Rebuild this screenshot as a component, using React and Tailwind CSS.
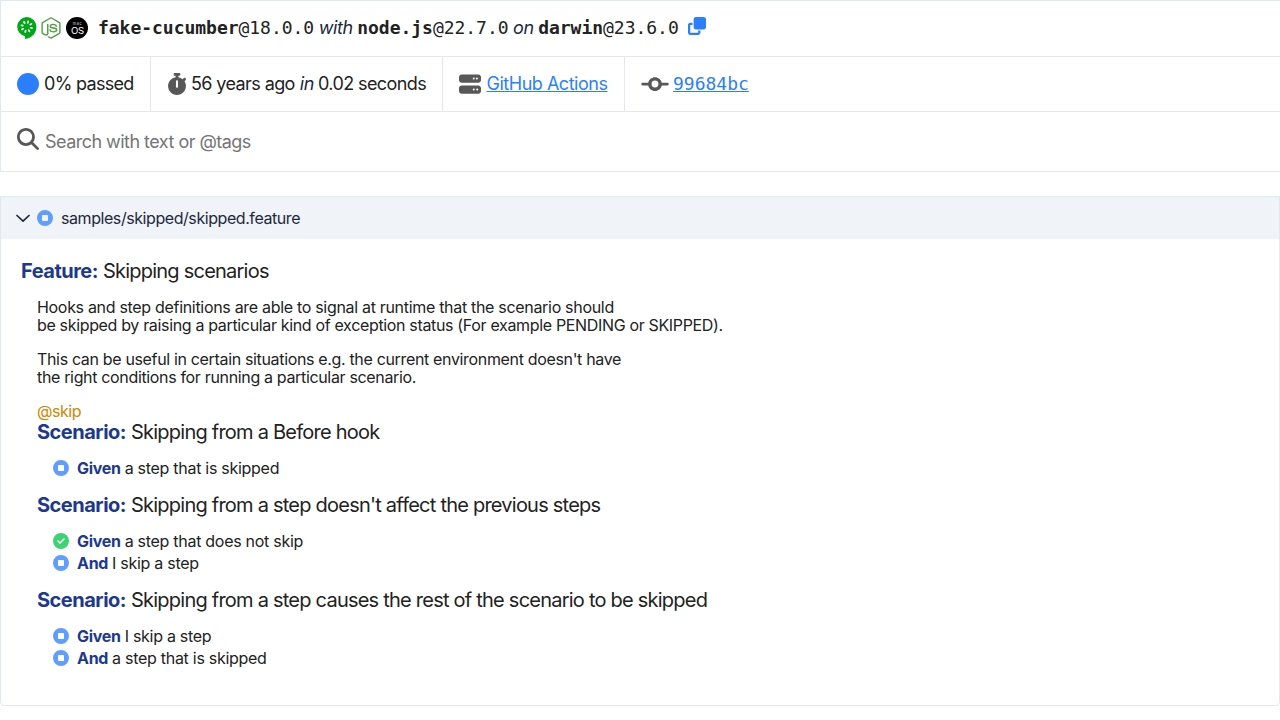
import {
  FaCircleCheck,
  FaCircleStop,
  FaClone,
  FaCodeCommit,
  FaMagnifyingGlass,
  FaNodeJs,
  FaServer,
  FaStopwatch,
} from "react-icons/fa6";

const SEEDS = [15, 60, 105, 150, 195, 240, 285, 330];

function CucumberLogo() {
  return (
    <svg viewBox="0 0 20 22" className="h-[22px] w-5">
      <path d="M9.7 0A9.7 9.7 0 0 0 8 19.2V22C14.5 21 19.4 16.5 19.4 9.9A9.7 9.7 0 0 0 9.7 0Z" fill="#00a818" />
      {SEEDS.map((a) => (
        <ellipse key={a} cx="9.7" cy="4.9" rx="0.95" ry="1.6" fill="#fff" transform={`rotate(${a} 9.7 9.7)`} />
      ))}
    </svg>
  );
}

function MacLogo() {
  return (
    <svg viewBox="0 0 22 22" className="size-[22px]">
      <circle cx="11" cy="11" r="11" fill="#000" />
      <text x="11" y="7.9" textAnchor="middle" fontFamily="Inter, sans-serif" fontSize="3.8" fill="#ddd" textLength="8.4">mac</text>
      <text x="11.2" y="17" textAnchor="middle" fontFamily="Inter, sans-serif" fontSize="9.6" fill="#fff" textLength="12.6">OS</text>
    </svg>
  );
}

function Meta({ name, version }) {
  return (
    <span className="font-['DejaVu_Sans_Mono',monospace] tracking-[-0.03px]">
      <b>{name}</b>@{version}
    </span>
  );
}

function Word({ children }) {
  return <em className="text-[#1d293d] tracking-[-0.4px]">{children}</em>;
}

function Step({ status, keyword, text }) {
  return (
    <li className="flex h-[22px] items-center">
      {status === "passed" ? (
        <FaCircleCheck className="size-4 text-[#3dd375]" />
      ) : (
        <FaCircleStop className="size-4 text-[#5f9eff]" />
      )}
      <b className="ml-2 tracking-[-0.3px] text-[#1c398e]">{keyword}</b>
      <span className="ml-1 tracking-[-0.28px]">{text}</span>
    </li>
  );
}

function Title({ keyword, text }) {
  return (
    <h2 className="flex h-6 items-center gap-[5px] text-[20px] leading-6">
      <b className="tracking-[-0.5px] text-[#1c398e]">{keyword}:</b>
      <span className="tracking-[-0.77px]">{text}</span>
    </h2>
  );
}

function Scenario({ text, steps }) {
  return (
    <section>
      <Title keyword="Scenario" text={text} />
      <ul className="mt-[13px] pl-4">
        {steps.map((s) => (
          <Step key={s[1] + s[2]} status={s[0]} keyword={s[1]} text={s[2]} />
        ))}
      </ul>
    </section>
  );
}

export default function App() {
  return (
    <div className="h-[720px] overflow-hidden bg-white font-['Inter',sans-serif] text-[16px] tracking-[-0.31px] text-[#222]">
      <header className="border border-r-0 border-[#e2e8f0] text-[18px] tracking-[-0.6px]">
        <div className="flex h-[55px] items-center whitespace-nowrap pb-0.5 pl-4">
          <span className="flex items-center">
            <CucumberLogo />
            <FaNodeJs className="ml-[3px] size-[22px] text-[#539e43]" />
            <span className="ml-1"><MacLogo /></span>
          </span>
          <span className="ml-[10px] flex items-center gap-[4.5px]">
            <Meta name="fake-cucumber" version="18.0.0" />
            <Word>with</Word>
            <Meta name="node.js" version="22.7.0" />
            <Word>on</Word>
            <Meta name="darwin" version="23.6.0" />
          </span>
          <FaClone className="mb-[3px] ml-[9px] size-[18px] text-[#2b7fff]" />
        </div>
        <div className="flex h-14 border-y border-[#e2e8f0] whitespace-nowrap">
          <div className="flex w-[150px] items-center border-r border-[#e2e8f0] pb-px pl-4">
            <span className="size-[22px] rounded-full bg-[#2b7fff]" />
            <span className="ml-[5px] tracking-[-0.7px]">0% passed</span>
          </div>
          <div className="flex w-[292px] items-center border-r border-[#e2e8f0] pb-px pl-4">
            <FaStopwatch className="h-[22px] w-5 text-[#585858]" />
            <span className="ml-1">56 years ago</span>
            <span className="ml-[5px] flex"><Word>in</Word></span>
            <span className="ml-1">0.02 seconds</span>
          </div>
          <div className="flex w-[182px] items-center border-r border-[#e2e8f0] pb-px pl-4">
            <FaServer className="size-[22px] text-[#585858]" />
            <a className="ml-[5.5px] tracking-[-0.48px] text-[#2b7fff] underline">GitHub Actions</a>
          </div>
          <div className="flex items-center pb-px pl-4">
            <FaCodeCommit className="h-[22px] w-7 text-[#585858]" />
            <a className="ml-1 font-['DejaVu_Sans_Mono',monospace] tracking-normal text-[#2b7fff] underline">99684bc</a>
          </div>
        </div>
        <div className="flex h-[59px] items-center pl-4">
          <FaMagnifyingGlass className="mb-[5px] size-[22px] text-[#585858]" />
          <span className="ml-1.5 tracking-[-0.53px] text-[#757575]">Search with text or @tags</span>
        </div>
      </header>

      <main className="mt-6 h-[510px] overflow-hidden rounded-b-sm border border-[#e2e8f0]">
        <div className="flex h-[42px] items-center bg-[#f0f3f8] pl-[15px] text-[#1d293d]">
          <svg viewBox="0 0 14 14" className="size-3.5" fill="none" stroke="currentColor" strokeWidth="1.7" strokeLinecap="round" strokeLinejoin="round">
            <path d="M1 4.5 L7 10.2 L13 4.5" />
          </svg>
          <FaCircleStop className="ml-[7px] size-4 text-[#5f9eff]" />
          <span className="ml-2 tracking-[-0.43px]">samples/skipped/skipped.feature</span>
        </div>
        <div className="pt-5 pl-5">
          <Title keyword="Feature" text="Skipping scenarios" />
          <div className="mt-[15px] pl-4">
            <div className="flex flex-col gap-4 leading-[18px]">
              <p>
                Hooks and step definitions are able to signal at runtime that the scenario should
                <br />
                <span className="tracking-[-0.34px]">be skipped by raising a particular kind of exception status (For example PENDING or SKIPPED).</span>
              </p>
              <p className="tracking-[-0.34px]">
                This can be useful in certain situations e.g. the current environment doesn't have
                <br />
                the right conditions for running a particular scenario.
              </p>
              <span className="tracking-[-0.45px] text-[#d08700]">@skip</span>
            </div>
            <div className="flex flex-col gap-3.5">
              <Scenario text="Skipping from a Before hook" steps={[["skipped", "Given", "a step that is skipped"]]} />
              <Scenario
                text="Skipping from a step doesn't affect the previous steps"
                steps={[
                  ["passed", "Given", "a step that does not skip"],
                  ["skipped", "And", "I skip a step"],
                ]}
              />
              <Scenario
                text="Skipping from a step causes the rest of the scenario to be skipped"
                steps={[
                  ["skipped", "Given", "I skip a step"],
                  ["skipped", "And", "a step that is skipped"],
                ]}
              />
            </div>
          </div>
        </div>
      </main>
    </div>
  );
}
